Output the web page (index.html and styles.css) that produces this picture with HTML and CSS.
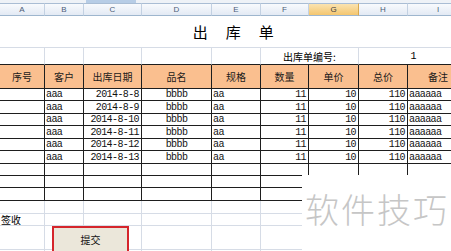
FILE: index.html
```html
<!DOCTYPE html>
<html lang="zh">
<head>
<meta charset="utf-8">
<title>出库单</title>
<link rel="stylesheet" href="styles.css">
</head>
<body>
<div class="sheet">
  <div class="topbar"><span class="tab"></span></div>
  <table class="grid">
    <colgroup>
      <col class="ca"><col class="cb"><col class="cc"><col class="cd"><col class="ce"><col class="cf"><col class="cg"><col class="ch"><col class="ci">
    </colgroup>
    <thead>
      <tr class="colhead">
        <th>A</th><th>B</th><th>C</th><th>D</th><th>E</th><th>F</th><th class="sel">G</th><th>H</th><th>I</th>
      </tr>
    </thead>
    <tbody>
      <tr class="r-title"><td colspan="9" class="title">出　库　单</td></tr>
      <tr class="r-no">
        <td></td><td></td><td></td><td></td><td></td>
        <td colspan="2" class="c">出库单编号:</td>
        <td colspan="2" class="c num">1</td>
      </tr>
      <tr class="r-head box">
        <td>序号</td><td>客户</td><td>出库日期</td><td>品名</td><td>规格</td><td>数量</td><td>单价</td><td>总价</td><td>备注</td>
      </tr>
      <tr class="r-data h12 box"><td></td><td class="l">aaa</td><td class="r">2014-8-8</td><td class="c">bbbb</td><td class="l">aa</td><td class="r">11</td><td class="r">10</td><td class="r">110</td><td class="l">aaaaaa</td></tr>
      <tr class="r-data h13 box"><td></td><td class="l">aaa</td><td class="r">2014-8-9</td><td class="c">bbbb</td><td class="l">aa</td><td class="r">11</td><td class="r">10</td><td class="r">110</td><td class="l">aaaaaa</td></tr>
      <tr class="r-data h12 box"><td></td><td class="l">aaa</td><td class="r">2014-8-10</td><td class="c">bbbb</td><td class="l">aa</td><td class="r">11</td><td class="r">10</td><td class="r">110</td><td class="l">aaaaaa</td></tr>
      <tr class="r-data h13 box"><td></td><td class="l">aaa</td><td class="r">2014-8-11</td><td class="c">bbbb</td><td class="l">aa</td><td class="r">11</td><td class="r">10</td><td class="r">110</td><td class="l">aaaaaa</td></tr>
      <tr class="r-data h12 box"><td></td><td class="l">aaa</td><td class="r">2014-8-12</td><td class="c">bbbb</td><td class="l">aa</td><td class="r">11</td><td class="r">10</td><td class="r">110</td><td class="l">aaaaaa</td></tr>
      <tr class="r-data h13 box"><td></td><td class="l">aaa</td><td class="r">2014-8-13</td><td class="c">bbbb</td><td class="l">aa</td><td class="r">11</td><td class="r">10</td><td class="r">110</td><td class="l">aaaaaa</td></tr>
      <tr class="r-data h12 box"><td></td><td></td><td></td><td></td><td></td><td></td><td></td><td></td><td></td></tr>
      <tr class="r-data h12 box"><td></td><td></td><td></td><td></td><td></td><td></td><td></td><td></td><td></td></tr>
      <tr class="r-data h13 box"><td></td><td></td><td></td><td></td><td></td><td></td><td></td><td></td><td></td></tr>
      <tr class="h13"><td></td><td></td><td></td><td></td><td></td><td></td><td></td><td></td><td></td></tr>
      <tr class="h12 r-sign"><td class="sign">签收</td><td></td><td></td><td></td><td></td><td></td><td></td><td></td><td></td></tr>
      <tr class="h24"><td></td><td></td><td></td><td></td><td></td><td></td><td></td><td></td><td></td></tr>
      <tr class="h24"><td></td><td></td><td></td><td></td><td></td><td></td><td></td><td></td><td></td></tr>
    </tbody>
  </table>
  <button class="submit" type="button">提交</button>
  <div class="stamp">软件技巧</div>
</div>
</body>
</html>
```

FILE: styles.css
```css
* { box-sizing: border-box; }
html, body { margin: 0; padding: 0; background: #fff; }
body { width: 451px; height: 251px; overflow: hidden; }

.sheet {
  position: relative;
  width: 451px;
  height: 251px;
  overflow: hidden;
}

.topbar {
  height: 3px;
  background: #eef2f7;
  display: flex;
}
.topbar .tab {
  margin-left: 86px;
  width: 50px;
  height: 3px;
  background: #b7cde6;
}

.grid {
  table-layout: fixed;
  width: 469px;
  border-collapse: separate;
  border-spacing: 0;
  font-family: "Noto Sans CJK SC", sans-serif;
  font-size: 10px;
  color: #000;
}

.ca { width: 45px; }
.cb { width: 39px; }
.cc { width: 58px; }
.cd { width: 70px; }
.ce { width: 49px; }
.cf { width: 48px; }
.cg { width: 50px; }
.ch { width: 49px; }
.ci { width: 61px; }

.grid td, .grid th {
  padding: 0 2px;
  border-right: 1px solid #d6dce6;
  border-bottom: 1px solid #d6dce6;
  white-space: nowrap;
  overflow: hidden;
  line-height: 11px;
  font-weight: normal;
  vertical-align: bottom;
}

/* column letters */
.colhead th {
  height: 13px;
  border-top: 1px solid #a9bdd4;
  border-bottom: 1px solid #9eb6ce;
  border-right: 1px solid #c3d1e2;
  background: linear-gradient(#f8fafd, #e3eaf4);
  font-family: "Liberation Sans", sans-serif;
  font-size: 8px;
  color: #4d5d78;
  text-align: center;
  vertical-align: middle;
  line-height: 10px;
}
.colhead th.sel {
  background: linear-gradient(#fbe3b0, #f4c66f);
  color: #3e3e3e;
  border-right-color: #d9a94e;
}

/* title */
.r-title td {
  height: 32px;
  vertical-align: middle;
  text-align: center;
}
.title {
  font-size: 15px;
  font-weight: bold;
  letter-spacing: 1.5px;
  line-height: 18px;
}

.r-no td {
  height: 17px;
  border-bottom-color: #1e1e1e;
  vertical-align: middle;
}
.r-no .num {
  font-family: "Liberation Mono", monospace;
}

/* bordered table region */
.box td {
  border-right-color: #1e1e1e;
  border-bottom-color: #1e1e1e;
}
.r-head td {
  height: 24px;
  background: #fabf8f;
  text-align: center;
  vertical-align: middle;
  color: #1a1a1a;
}

.r-data td {
  font-family: "Liberation Mono", "Noto Sans CJK SC", monospace;
  font-size: 10px;
  letter-spacing: -0.6px;
  color: #111;
}

.h12 td { height: 12px; }
.h13 td { height: 13px; }
.h24 td { height: 24px; }

.l { text-align: left; }
.r { text-align: right; }
.c { text-align: center; }
.grid td.l { padding-left: 1px; }
.grid td.r { padding-right: 2px; }

.r-sign td { vertical-align: bottom; }
.grid td.sign {
  padding-left: 1px;
  line-height: 11px;
  overflow: visible;
}

/* form button overlaying the sheet */
.submit {
  position: absolute;
  left: 52px;
  top: 226px;
  width: 77px;
  height: 30px;
  margin: 0;
  padding: 0 0 4px;
  border: 2px solid #d5252b;
  background: #ebe7da;
  font-family: "Noto Sans CJK SC", sans-serif;
  font-size: 10px;
  color: #111;
}

/* watermark with its white plate */
.stamp {
  position: absolute;
  left: 302px;
  top: 175px;
  right: 0;
  bottom: 0;
  background: #fff;
  padding: 16px 0 0 3px;
  font-family: "Noto Sans CJK SC", sans-serif;
  font-weight: 300;
  font-size: 34px;
  line-height: 36px;
  letter-spacing: 2px;
  color: #c6c6c6;
  white-space: nowrap;
}
```
